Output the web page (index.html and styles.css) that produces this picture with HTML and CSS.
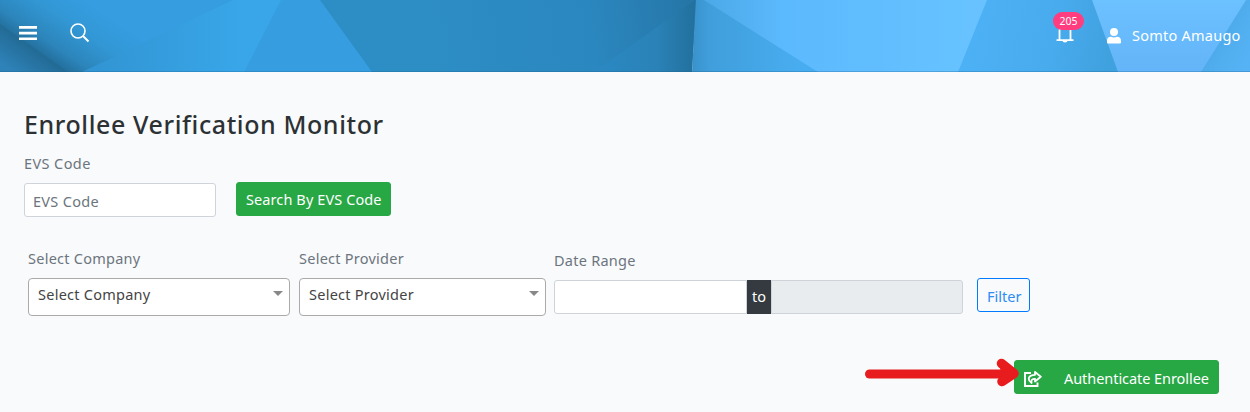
FILE: index.html
```html
<!DOCTYPE html>
<html lang="en">
<head>
<meta charset="utf-8">
<title>Enrollee Verification Monitor</title>
<link rel="stylesheet" href="styles.css">
</head>
<body>
<header class="topbar">
  <svg class="topbar-art" viewBox="0 0 1250 72" preserveAspectRatio="none" aria-hidden="true">
    <defs>
      <linearGradient id="a" gradientUnits="userSpaceOnUse" x1="34" y1="48" x2="72" y2="-8"><stop offset="0" stop-color="#24719f"/><stop offset=".2" stop-color="#2c85bb"/><stop offset=".6" stop-color="#3297d4"/><stop offset="1" stop-color="#359de0"/></linearGradient>
      <linearGradient id="b" gradientUnits="userSpaceOnUse" x1="36" y1="46" x2="16" y2="74"><stop offset="0" stop-color="#216892"/><stop offset="1" stop-color="#2e82b8"/></linearGradient>
      <linearGradient id="c" gradientUnits="userSpaceOnUse" x1="90" y1="0" x2="240" y2="0"><stop offset="0" stop-color="#3294d2"/><stop offset="1" stop-color="#38a6e9"/></linearGradient>
      <linearGradient id="d" gradientUnits="userSpaceOnUse" x1="430" y1="40" x2="696" y2="0"><stop offset="0" stop-color="#2d8dc5"/><stop offset=".6" stop-color="#2b87bf"/><stop offset="1" stop-color="#2575a6"/></linearGradient>
      <linearGradient id="e" gradientUnits="userSpaceOnUse" x1="600" y1="0" x2="695" y2="0"><stop offset="0" stop-color="#2b88c2"/><stop offset=".6" stop-color="#2a82b7"/><stop offset="1" stop-color="#22709d"/></linearGradient>
      <linearGradient id="f" gradientUnits="userSpaceOnUse" x1="693" y1="0" x2="800" y2="0"><stop offset="0" stop-color="#3a92cb"/><stop offset=".15" stop-color="#409edb"/><stop offset="1" stop-color="#48adf0"/></linearGradient>
      <linearGradient id="g" gradientUnits="userSpaceOnUse" x1="704" y1="0" x2="970" y2="0"><stop offset="0" stop-color="#4ba9e8"/><stop offset=".3" stop-color="#5bb9fd"/><stop offset="1" stop-color="#67c2ff"/></linearGradient>
      <linearGradient id="h" gradientUnits="userSpaceOnUse" x1="970" y1="20" x2="1110" y2="50"><stop offset="0" stop-color="#4db1f5"/><stop offset=".6" stop-color="#48abed"/><stop offset="1" stop-color="#40a1df"/></linearGradient>
      <linearGradient id="i" x1="0" y1="0" x2="0" y2="1"><stop offset="0" stop-color="#6cc1ff"/><stop offset="1" stop-color="#63b4f8"/></linearGradient>
      <linearGradient id="j" gradientUnits="userSpaceOnUse" x1="1215" y1="35" x2="1250" y2="55"><stop offset="0" stop-color="#4da9e9"/><stop offset="1" stop-color="#55b3f5"/></linearGradient>
    </defs>
    <path fill="url(#a)" d="M0 0H240L90 72H0z"/>
    <path fill="url(#b)" d="M0 24L68 72H0z"/>
    <path fill="url(#c)" d="M233 0H283L246 72H82z"/>
    <path fill="#369ee0" d="M281 0H322L374 72H244z"/>
    <path fill="url(#d)" d="M320 0H697L692 72H372z"/>
    <path fill="url(#e)" d="M695 0L692 72H594z"/>
    <path fill="url(#f)" d="M696 0H708L822 72H692z"/>
    <path fill="url(#g)" d="M704 0H988L959 72H818z"/>
    <path fill="url(#h)" d="M987 0H1094L1120 72H958z"/>
    <path fill="url(#i)" d="M1092 0H1248L1203 72H1118z"/>
    <path fill="url(#j)" d="M1246 0H1250V72H1201z"/>
    <path fill="#1c5f90" opacity=".3" d="M0 71H1250V72H0z"/>
  </svg>
  <div class="topbar-left">
    <svg class="menu-icon" viewBox="0 0 18 14"><path fill="#fff" d="M0 0h18v2.8H0zM0 5.8h18v2.8H0zM0 11.4h18V14H0z"/></svg>
    <svg class="search-icon" viewBox="0 0 20 20" fill="none" stroke="#fff" stroke-width="1.6"><circle cx="8" cy="8" r="7"/><path d="M13 13l5.500 5.500" stroke-width="2"/></svg>
  </div>
  <div class="topbar-right">
    <div class="alerts">
      <svg class="bell-icon" viewBox="0 0 18 20" fill="none" stroke="#fff" stroke-width="1.8"><path d="M3.500 17V7.500a5.500 5.500 0 0 1 11 0V17M.5 17.200h17"/><path d="M6.500 17.800h5a2.500 1.800 0 0 1-5 0z" fill="#fff" stroke="none"/></svg>
      <span class="count">205</span>
    </div>
    <svg class="user-icon" viewBox="0 0 14 16" fill="#fff"><circle cx="7" cy="4" r="4"/><path d="M4 8.800q3 1.400 6 0c2.600 0 4 1.600 4 4V14.500q0 1-1 1H1q-1 0-1-1V12.800c0-2.400 1.400-4 4-4z"/></svg>
    <span class="user-name">Somto Amaugo</span>
  </div>
</header>
<main class="page">
  <h1 class="title">Enrollee Verification Monitor</h1>
  <label class="label code-label" for="evs">EVS Code</label>
  <div class="code-row">
    <input class="input code-input" id="evs" placeholder="EVS Code">
    <button class="btn btn-green search-btn">Search By EVS Code</button>
  </div>
  <div class="filters">
    <div class="field company">
      <span class="label">Select Company</span>
      <div class="select"><span>Select Company</span><i class="caret"></i></div>
    </div>
    <div class="field provider">
      <span class="label">Select Provider</span>
      <div class="select"><span>Select Provider</span><i class="caret"></i></div>
    </div>
    <div class="field dates">
      <span class="label">Date Range</span>
      <div class="range">
        <input class="input date-from" aria-label="From">
        <span class="to">to</span>
        <input class="input date-to" aria-label="To" disabled>
      </div>
    </div>
    <button class="btn filter-btn">Filter</button>
  </div>
  <div class="actions">
    <svg class="arrow" viewBox="0 0 156 30" fill="none" stroke="#e81c1e" stroke-linecap="round" stroke-linejoin="round"><path stroke-width="9" d="M5.500 16H140"/><path stroke-width="9.500" d="M137.500 5.500L150 15.500L138 23.500"/><path fill="#e81c1e" stroke="none" d="M136 5L150 15L137 25z"/></svg>
    <button class="btn btn-green auth-btn">
      <svg class="share-icon" viewBox="0 0 18 16" fill="none" stroke="#fff" stroke-width="1.900"><path d="M7 2H1V15H13.500V11.500"/><path stroke-width="1.800" stroke-linejoin="round" d="M11 1L16.800 5.800L11 10.500V7.800C8 7.800 7 9 7.600 12C3 9 4 4 11 3.800z"/></svg>
      <span class="auth-text">Authenticate Enrollee</span>
    </button>
  </div>
</main>
</body>
</html>
```
FILE: styles.css
```css
* { box-sizing: border-box; }
body {
  margin: 0;
  height: 412px;
  overflow: hidden;
  background: #f9fafc;
  font-family: "Noto Sans", "Open Sans", sans-serif;
  font-size: 14.5px;
  line-height: 20px;
  color: #6c757d;
}
button, input { font: inherit; letter-spacing: inherit; }
svg { display: block; flex: none; }

.topbar {
  position: relative;
  height: 72px;
  display: flex;
  justify-content: space-between;
  color: #fff;
}
.topbar-art { position: absolute; inset: 0; width: 100%; height: 72px; z-index: -1; }
.topbar-left { display: flex; align-items: flex-start; padding: 23px 0 0 19px; gap: 32px; }
.menu-icon { width: 18px; height: 14px; margin-top: 3px; }
.search-icon { width: 20px; height: 20px; margin-left: 1px; }
.topbar-right { display: flex; align-items: flex-start; padding-right: 10px; }
.alerts { position: relative; padding-top: 23px; margin-right: 33px; }
.bell-icon { width: 18px; height: 20px; }
.count {
  position: absolute;
  left: -3px;
  top: 12px;
  width: 31px;
  height: 18px;
  border-radius: 9px;
  background: #ff3d7f;
  font-size: 10.5px;
  line-height: 18px;
  text-align: center;
}
.user-icon { width: 14px; height: 16px; margin-top: 28px; }
.user-name { width: 108px; margin: 25px 0 0 11px; white-space: nowrap; letter-spacing: .24px; }

.page { padding: 35px 31px 0 24px; }
.title {
  margin: 0;
  font-size: 25px;
  line-height: 34px;
  font-weight: 500;
  letter-spacing: .6px;
  color: #2c3134;
}
.label { display: block; white-space: nowrap; letter-spacing: .25px; }
.code-label { margin-top: 12px; letter-spacing: .4px; }
.code-row { display: flex; align-items: flex-start; gap: 20px; margin-top: 9px; }
.input {
  height: 34px;
  border: 1px solid #ced4da;
  border-radius: 3px;
  background: #fff;
  padding: 1px 8px 0;
}
.code-input { width: 192px; margin-top: 1px; letter-spacing: .3px; }
.input::placeholder { color: #6c757d; opacity: 1; }
.btn {
  height: 34px;
  padding: 0 9px;
  border: 1px solid #28a745;
  border-radius: 3px;
  white-space: nowrap;
}
.btn-green { background: #28a745; color: #fff; }
.search-btn { width: 155px; letter-spacing: .1px; }

.filters { display: flex; align-items: flex-start; padding-left: 4px; margin-top: 31px; }
.company { width: 262px; margin-right: 9px; }
.provider { width: 247px; margin-right: 8px; }
.dates { width: 409px; margin-right: 14px; padding-top: 2px; }
.select {
  display: flex;
  justify-content: space-between;
  height: 38px;
  margin-top: 10px;
  padding: 5px 6px 0 9px;
  border: 1px solid #aaa;
  border-radius: 4px;
  background: #fff;
  color: #444;
  letter-spacing: .25px;
}
.caret {
  width: 0;
  height: 0;
  margin-top: 7px;
  border: solid transparent;
  border-width: 5px 5px 0;
  border-top-color: #888;
}
.range { display: flex; margin-top: 10px; }
.date-from { width: 193px; border-radius: 3px 0 0 3px; }
.to { width: 24px; height: 34px; background: #343a40; color: #fff; text-align: center; line-height: 33px; }
.date-to { width: 192px; border-radius: 0 3px 3px 0; background: #e9ecef; }
.filter-btn { width: 53px; margin-top: 30px; padding-top: 2px; border-color: #007bff; background: transparent; color: #2f8cf5; }

.actions { display: flex; justify-content: flex-end; align-items: flex-start; margin-top: 44px; }
.arrow { width: 156px; height: 30px; margin: -2px -6px 0 0; z-index: 1; }
.auth-btn { display: flex; align-items: center; width: 205px; gap: 22px; letter-spacing: -.06px; }
.share-icon { width: 18px; height: 16px; margin-top: 3px; }
.auth-text { padding-top: 2px; }
```
